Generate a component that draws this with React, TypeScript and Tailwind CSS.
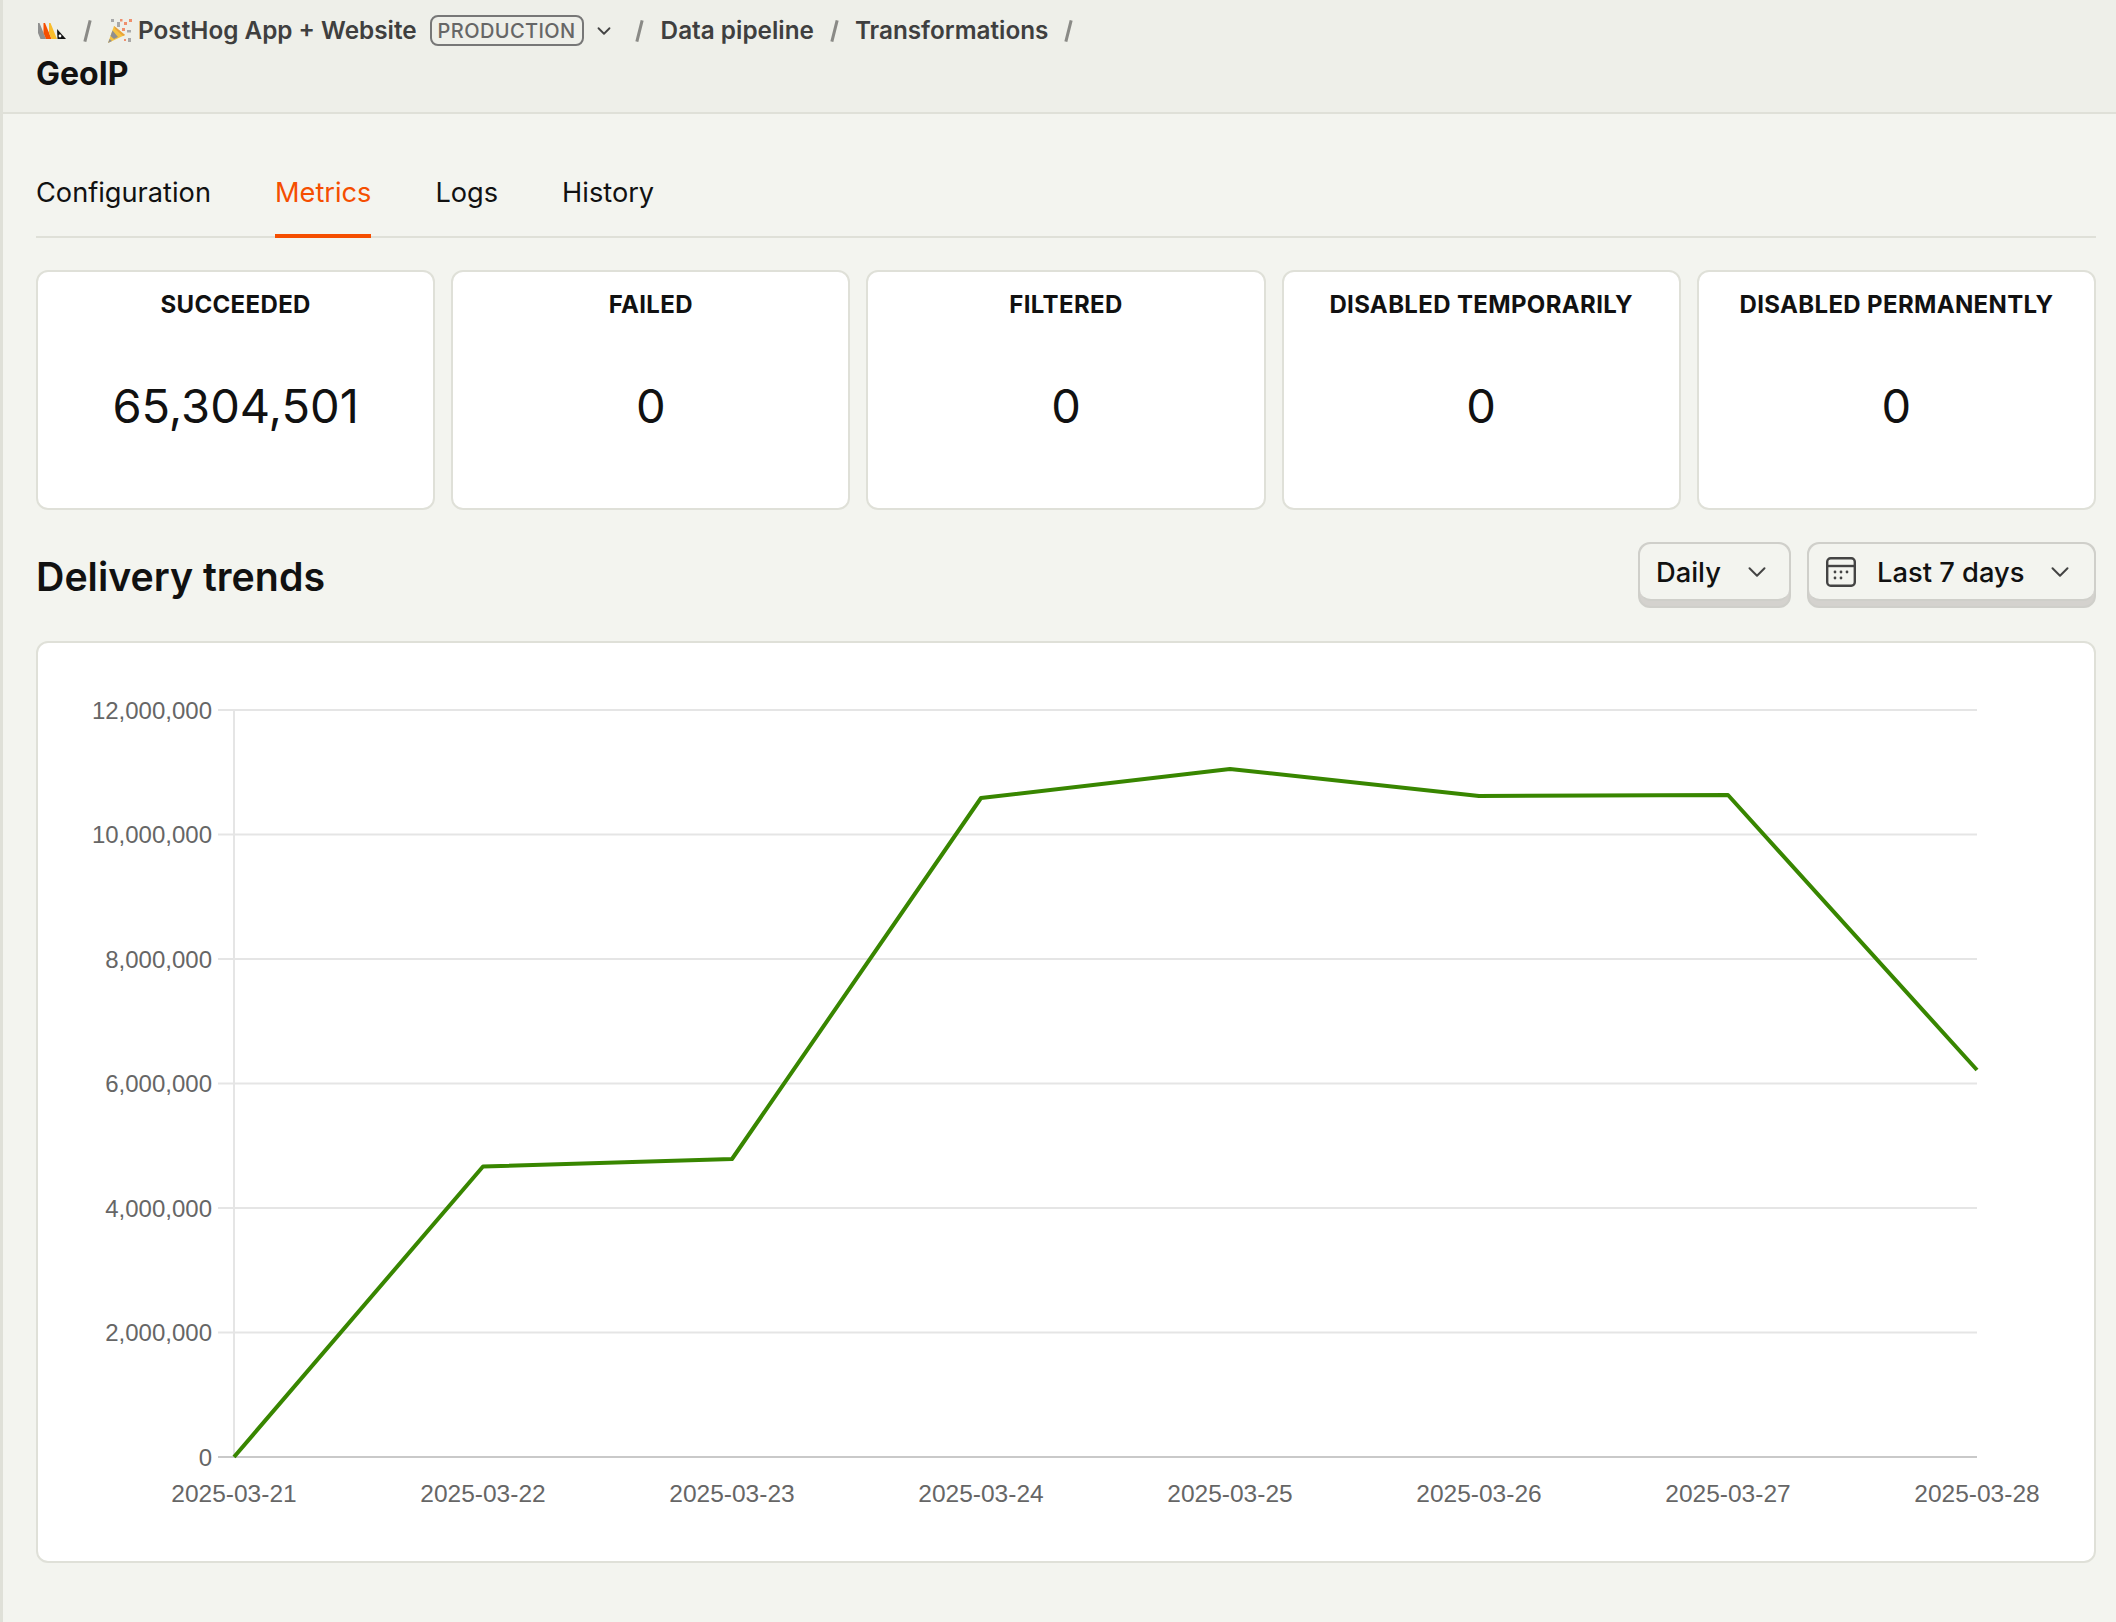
import { ChevronDown } from "lucide-react";

const TABS = ["Configuration", "Metrics", "Logs", "History"];

const CARDS = [
  { label: "SUCCEEDED", value: "65,304,501" },
  { label: "FAILED", value: "0" },
  { label: "FILTERED", value: "0" },
  { label: "DISABLED TEMPORARILY", value: "0" },
  { label: "DISABLED PERMANENTLY", value: "0" },
];

// chart coordinates are relative to the inside of the card (border 2px)
const OX = 38;
const OY = 643;
const PLOT_LEFT = 234 - OX;
const PLOT_RIGHT = 1977 - OX;
const PLOT_TOP = 710 - OY;
const PLOT_BOTTOM = 1457 - OY;
const STEP_X = (PLOT_RIGHT - PLOT_LEFT) / 7;
const STEP_Y = (PLOT_BOTTOM - PLOT_TOP) / 6;

const Y_LABELS = ["12,000,000", "10,000,000", "8,000,000", "6,000,000", "4,000,000", "2,000,000", "0"];
const DATES = ["2025-03-21", "2025-03-22", "2025-03-23", "2025-03-24", "2025-03-25", "2025-03-26", "2025-03-27", "2025-03-28"];
const POINTS = [1457, 1166.5, 1159, 798, 769, 796, 795, 1070];

function Slash() {
  return <span className="block h-[22px] w-[3px] rotate-[14deg] bg-[#8a8a86]" />;
}

function Logo() {
  return (
    <svg width="28" height="16" viewBox="0 0 28 16">
      <polygon points="0,0 1.5,0 8,16 2.5,16 0,10" fill="#8f8f8f" />
      <polygon points="5.5,0 7,0 13.5,16 8,16 5.5,10" fill="#f54e00" />
      <polygon points="11,0 12.5,0 19,16 13.5,16 11,10" fill="#f9bd2b" />
      <polygon points="19,6 28,16 19.5,16" fill="#111" />
      <circle cx="22" cy="13" r="1.4" fill="#fff" />
    </svg>
  );
}

function Popper() {
  return (
    <svg width="24" height="24" viewBox="0 0 24 24">
      <polygon points="0,24 6,7 17,16" fill="#f5c342" />
      <polygon points="2.5,17 4.5,11.5 10,18 6,20" fill="#8f8f8f" />
      <polygon points="0,24 1.5,20 4,22" fill="#8f8f8f" />
      <polygon points="6,7 8,8.5 17,16 15,17 7,10" fill="#e9a33c" />
      <rect x="3" y="0" width="3" height="3" fill="#a8a8a8" />
      <rect x="9" y="3" width="3" height="5" fill="#a8a8a8" />
      <rect x="12" y="0" width="2.5" height="2.5" fill="#ef8f6d" />
      <rect x="16" y="3" width="3" height="3" fill="#ef8f6d" />
      <rect x="21" y="0" width="3" height="3" fill="#ef8f6d" />
      <rect x="14" y="9" width="3" height="3" fill="#ef8f6d" />
      <rect x="19" y="11" width="4" height="2.5" fill="#a8a8a8" />
      <rect x="20" y="19" width="3" height="4" fill="#a8a8a8" />
      <rect x="16" y="20" width="2" height="2" fill="#ef8f6d" />
    </svg>
  );
}

function CalendarIcon() {
  return (
    <svg width="30" height="30" viewBox="0 0 30 30" fill="none" stroke="#444" strokeWidth="2.4">
      <rect x="1.2" y="1.2" width="27.6" height="27.6" rx="3.5" />
      <path d="M1.2 9h27.6" />
      <g fill="#444" stroke="none">
        <circle cx="9" cy="15" r="1.4" />
        <circle cx="15" cy="15" r="1.4" />
        <circle cx="21" cy="15" r="1.4" />
        <circle cx="9" cy="21" r="1.4" />
        <circle cx="15" cy="21" r="1.4" />
      </g>
    </svg>
  );
}

function DropButton({ className, children }: { className: string; children: React.ReactNode }) {
  return (
    <button
      className={`flex h-[66px] items-start rounded-[12px] border-2 border-[#cfcfca] bg-[#d4d2ce] ${className}`}
    >
      <span className="flex h-[57px] w-full items-center rounded-[11px] border-b-2 border-[#cfcfca] bg-[#f3f4ef]">
        {children}
      </span>
    </button>
  );
}

function Chart() {
  const line = POINTS.map((y, i) => `${PLOT_LEFT + i * STEP_X},${y - OY}`).join(" ");
  return (
    <svg width="2056" height="918" viewBox="0 0 2056 918" className="block">
      {Y_LABELS.map((label, i) => {
        const y = PLOT_TOP + i * STEP_Y;
        return (
          <g key={label}>
            <line
              x1={PLOT_LEFT - 16}
              x2={PLOT_RIGHT}
              y1={y}
              y2={y}
              stroke={i === 6 ? "#c9c9c9" : "#e5e5e5"}
              strokeWidth="2"
            />
            <text
              x={PLOT_LEFT - 22}
              y={y + 8.5}
              textAnchor="end"
              fontFamily="Liberation Sans, Arial, sans-serif"
              fontSize="24"
              fill="#666"
            >
              {label}
            </text>
          </g>
        );
      })}
      <line x1={PLOT_LEFT} x2={PLOT_LEFT} y1={PLOT_TOP} y2={PLOT_BOTTOM} stroke="#e5e5e5" strokeWidth="2" />
      {DATES.map((d, i) => (
        <text
          key={d}
          x={PLOT_LEFT + i * STEP_X}
          y={1501.5 - OY}
          textAnchor="middle"
          fontFamily="Liberation Sans, Arial, sans-serif"
          fontSize="24.5"
          fill="#666"
        >
          {d}
        </text>
      ))}
      <polyline points={line} fill="none" stroke="#388600" strokeWidth="4" strokeLinejoin="round" />
    </svg>
  );
}

export default function App() {
  return (
    <div className="min-h-[1622px] border-l-[3px] border-[#dfe0d8] bg-[#f3f4ef] font-[Inter,sans-serif]">
      <header className="h-[114px] border-b-2 border-[#dfe0d8] bg-[#eeefe9] pl-[33px]">
        <div className="flex h-[60px] items-center pt-[1px] text-[24.3px] font-semibold text-[#3f3f3f]">
          <span className="ml-[2px]">
            <Logo />
          </span>
          <span className="ml-[20px]">
            <Slash />
          </span>
          <span className="ml-[19px]">
            <Popper />
          </span>
          <span className="ml-[6px]">PostHog App + Website</span>
          <span className="ml-[13px] flex h-[31px] w-[154px] items-center justify-center rounded-[8px] border-2 border-[#777] text-[20px] font-medium tracking-[0.4px] text-[#666]">
            PRODUCTION
          </span>
          <ChevronDown size={22} strokeWidth={2} className="ml-[9px] text-[#444]" />
          <span className="ml-[23px]">
            <Slash />
          </span>
          <span className="ml-[20px]">Data pipeline</span>
          <span className="ml-[19px]">
            <Slash />
          </span>
          <span className="ml-[19px]">Transformations</span>
          <span className="ml-[19px]">
            <Slash />
          </span>
        </div>
        <h1 className="text-[32px] leading-[28px] font-bold text-[#111]">GeoIP</h1>
      </header>

      <main className="pr-[20px] pl-[33px]">
        <nav className="mt-[50px] flex h-[74px] gap-[64px] border-b-2 border-[#dfe0d8]">
          {TABS.map((t) => (
            <div
              key={t}
              className={
                t === "Metrics"
                  ? "-mb-[2px] h-[74px] border-b-4 border-[#f54e00] text-[27.2px] leading-[57px] text-[#f54e00]"
                  : "text-[27.2px] leading-[57px] text-[#111]"
              }
            >
              {t}
            </div>
          ))}
        </nav>

        <div className="mt-[32px] grid grid-cols-5 gap-[16px]">
          {CARDS.map((c) => (
            <div
              key={c.label}
              className="flex h-[240px] flex-col items-center rounded-[12px] border-2 border-[#dfe0d8] bg-white pt-[18px] text-[#111]"
            >
              <div className="text-[24px] leading-[30px] font-bold tracking-[0.35px]">{c.label}</div>
              <div className="mt-[53px] text-[47px] leading-[66px]">{c.value}</div>
            </div>
          ))}
        </div>

        <div className="mt-[32px] flex h-[66px] items-center justify-between">
          <h2 className="pt-[5px] text-[39.3px] font-semibold text-[#111]">Delivery trends</h2>
          <div className="flex gap-[16px] text-[27.3px] font-medium text-[#111]">
            <DropButton className="w-[153px]">
              <span className="ml-[16px] pt-[3px]">Daily</span>
              <ChevronDown size={30} strokeWidth={1.6} className="ml-[21px] text-[#444]" />
            </DropButton>
            <DropButton className="w-[289px]">
              <span className="ml-[17px]">
                <CalendarIcon />
              </span>
              <span className="ml-[21px] pt-[3px]">Last 7 days</span>
              <ChevronDown size={30} strokeWidth={1.6} className="ml-[21px] text-[#444]" />
            </DropButton>
          </div>
        </div>

        <div className="mt-[33px] h-[922px] rounded-[12px] border-2 border-[#dfe0d8] bg-white">
          <Chart />
        </div>
      </main>
    </div>
  );
}
